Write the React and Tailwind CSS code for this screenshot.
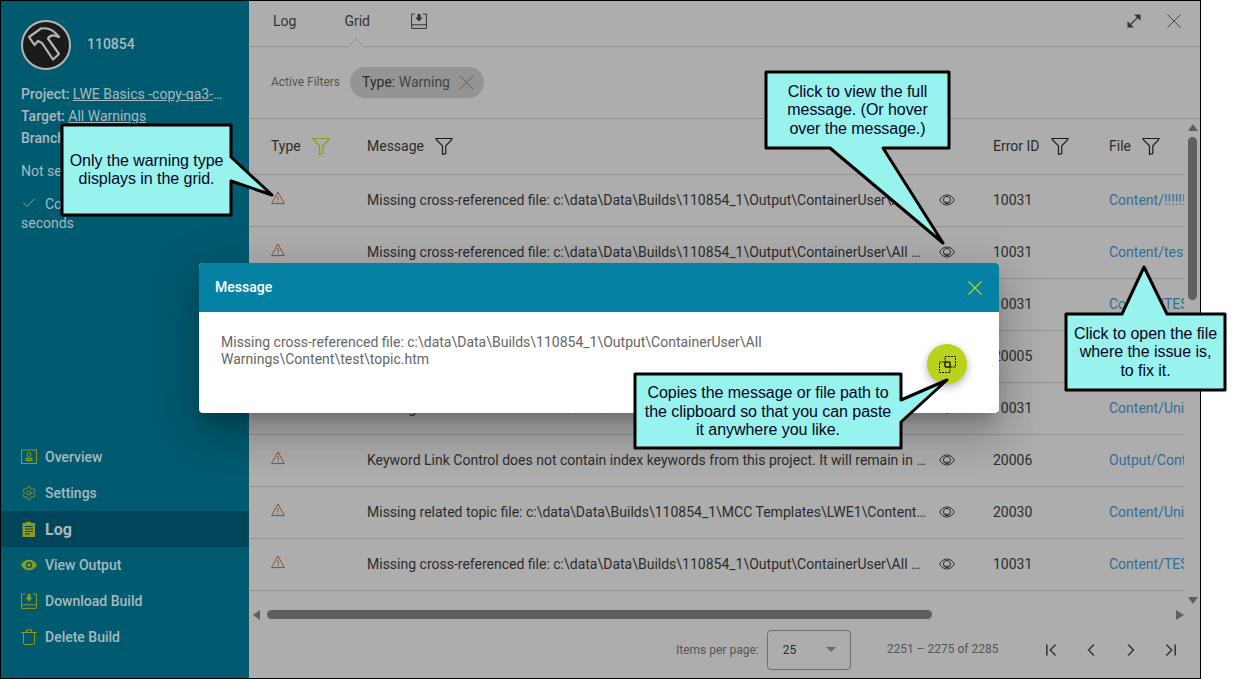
import React from "react";
import { Settings, Check, ChevronLeft, ChevronRight, ChevronFirst, ChevronLast } from "lucide-react";

const Cross = ({ size, color, width = 1 }) => (
  <svg width={size} height={size} viewBox="0 0 14 14" fill="none" stroke={color} strokeWidth={width}>
    <path d="M.5 .5l13 13M13.500 .5l-13 13" />
  </svg>
);

const Filter = ({ color = "#1c1c1c" }) => (
  <svg width="18" height="18" viewBox="0 0 18 18" fill="none" stroke={color} strokeWidth="1.2">
    <path d="M1 1.500h16l-1 2-5.200 5.300v7.700l-3.300 1V8.800L2 3.500z" />
  </svg>
);

const Warn = () => (
  <svg width="14" height="14" viewBox="0 0 14 14" fill="none" stroke="#87552c" strokeWidth="1">
    <path d="M7 1 L13.400 12.600 H.6 Z" />
    <path d="M7 5v4.200M7 10.200v1.200" />
  </svg>
);

const Eye = () => (
  <svg width="16" height="12" viewBox="0 0 16 12" fill="none" stroke="#2c2c2c" strokeWidth="1">
    <path d="M.6 6C2.500 2.600 5 1 8 1s5.500 1.600 7.400 5c-1.900 3.400-4.400 5-7.400 5S2.500 9.400 .6 6z" />
    <circle cx="8" cy="6" r="3.600" />
    <path d="M5.600 7.500c1 1.300 3.800 1.300 4.800 0" />
  </svg>
);

const Hammer = () => (
  <svg width="50" height="50" viewBox="0 0 50 50">
    <circle cx="25" cy="25" r="24" fill="#1b1b1b" stroke="#b5b5b5" strokeWidth="2" />
    <path d="M8 17 L20 8.500 C26 7.500 33 10 38 17 C33 14.500 29 15 27 18.500 L38 34 L32 39.500 L21 23 L17 21 L13.500 25 Z" fill="none" stroke="#b5b5b5" strokeWidth="2.200" strokeLinejoin="round" />
  </svg>
);

const navClass = "w-4 h-4";
const olive = "#8e9a1a";

const IconOverview = () => (
  <svg className={navClass} viewBox="0 0 16 16" fill="none" stroke={olive} strokeWidth="1">
    <rect x=".5" y="1" width="15" height="13.500" />
    <circle cx="8" cy="5.500" r="2" />
    <path d="M4.500 9.500h7M4.500 11.500h7" strokeWidth="1.300" />
  </svg>
);
const IconLog = () => (
  <svg className={navClass} viewBox="0 0 16 16">
    <path d="M1.500 2h3.500V.8h5V2h4v14h-12.500z" fill={olive} />
    <path d="M4 5.500h8M4 8h8M4 10.500h8M4 13h5" stroke="#00455a" strokeWidth="1" />
  </svg>
);
const IconEyeFill = () => (
  <svg className={navClass} viewBox="0 0 16 16">
    <path d="M0 8c2-3.600 4.700-5.200 8-5.200s6 1.600 8 5.200c-2 3.600-4.700 5.200-8 5.200S2 11.600 0 8z" fill={olive} />
    <circle cx="8" cy="8" r="3.200" fill="#005b70" />
    <circle cx="8" cy="8" r="1.800" fill={olive} />
  </svg>
);
const DownloadBox = ({ color, size = "w-4 h-4" }) => (
  <svg className={size} viewBox="0 0 16 16" fill="none" stroke={color} strokeWidth="1">
    <path d="M4 1H.6v14.400h14.800V1H12M.6 11.800h14.800" />
    <path d="M6.500 1h3v3.500h2.200L8 8.500 4.300 4.500h2.200z" fill={color} stroke="none" />
  </svg>
);
const IconTrash = () => (
  <svg className={navClass} viewBox="0 0 16 16" fill="none" stroke={olive} strokeWidth="1">
    <path d="M0 3.500h16M5.500 3.500V1h5v2.500M2.500 3.500v11a1 1 0 0 0 1 1h9a1 1 0 0 0 1-1v-11" />
  </svg>
);

const nav = [
  ["Overview", <IconOverview />],
  ["Settings", <Settings size={16} color={olive} strokeWidth={1.4} />],
  ["Log", <IconLog />, true],
  ["View Output", <IconEyeFill />],
  ["Download Build", <DownloadBox color={olive} />],
  ["Delete Build", <IconTrash />],
];

const xref = "Missing cross-referenced file: c:\\data\\Data\\Builds\\110854_1\\Output\\ContainerUser\\All Warnings\\Content\\test\\topic.htm";
const rows = [
  [xref, "10031", "Content/!!!!!!!!!"],
  [xref, "10031", "Content/test/topic"],
  [xref, "10031", "Content/TEST/topic"],
  ["Keyword Link Control does not contain index keywords from this project. It will remain in the output", "20005", "Content/Unit/topic"],
  [xref, "10031", "Content/Unit/topic"],
  ["Keyword Link Control does not contain index keywords from this project. It will remain in the output as is", "20006", "Output/Content/x"],
  ["Missing related topic file: c:\\data\\Data\\Builds\\110854_1\\MCC Templates\\LWE1\\Content\\Unit\\topic.htm", "20030", "Content/Unit/topic"],
  [xref, "10031", "Content/TEST/topic"],
];

const Callout = ({ points }) => (
  <svg className="absolute left-0 top-0 pointer-events-none" width="1235" height="679">
    <polygon points={points} fill="#98f2ee" stroke="#000" strokeWidth="3" strokeLinejoin="round" />
  </svg>
);

const CalloutText = ({ left, top, width, lines }) => (
  <div
    className="absolute text-center text-[16px] leading-[18.500px] text-[#05051e] tracking-[-0.05px] font-['Liberation_Sans',Arial,sans-serif]"
    style={{ left, top, width }}
  >
    {lines.map((l) => (
      <div key={l}>{l}</div>
    ))}
  </div>
);

export default function App() {
  return (
    <div className="relative w-[1235px] h-[679px] overflow-hidden bg-white font-['Roboto',sans-serif]">
      <div className="flex w-[1201px] h-[679px] border border-black">
        {/* sidebar */}
        <aside className="w-[248px] shrink-0 flex flex-col bg-[#005b70] text-[#a9b9bd] text-sm">
          <div className="flex items-center gap-4 pl-5 pt-[19px]">
            <Hammer />
            <span className="font-medium text-sm pb-[2px]">110854</span>
          </div>
          <div className="pl-5 mt-[13px] leading-[22px]">
            <div className="truncate w-[205px]"><span className="font-medium">Project: </span><span className="underline">LWE Basics -copy-qa3-copy</span></div>
            <div><span className="font-medium">Target: </span><span className="underline">All Warnings</span></div>
            <div className="font-medium">Branch: main</div>
            <div className="mt-[11px]">Not sent to destination</div>
            <div className="mt-[13px] leading-[19px] w-[210px]">
              <Check size={16} strokeWidth={1.2} className="inline mr-2 -mt-1" />
              Completed in 3 minutes 12 seconds
            </div>
          </div>
          <nav className="mt-auto mb-[23px] flex flex-col">
            {nav.map(([label, icon, active]) => (
              <div key={label} className={"h-9 pl-5 flex items-center gap-2 " + (active ? "bg-[#00455a] font-bold text-base" : "font-medium text-sm")}>
                {icon}
                <span className={active ? "pt-[1px]" : ""}>{label}</span>
              </div>
            ))}
          </nav>
        </aside>

        {/* main */}
        <main className="relative flex-1 min-w-0 flex flex-col bg-[#adadad] text-sm text-[#2c2c2c]">
          <div className="relative h-[46px] shrink-0 flex items-center border-b border-[#939393] pb-[5px]">
            <span className="ml-6 text-[#333]">Log</span>
            <span className="ml-[48px] text-[#333]">Grid</span>
            <span className="ml-[41px]"><DownloadBox color="#333" /></span>
            <svg className="absolute left-[99px] bottom-[-1px]" width="16" height="8" viewBox="0 0 16 8">
              <path d="M0 8 L8 0 L16 8" fill="#adadad" stroke="#939393" />
              <path d="M1 8h14" stroke="#adadad" strokeWidth="1.500" />
            </svg>
            <div className="ml-auto flex items-center gap-[25px] pr-[19px]">
              <svg width="16" height="16" viewBox="0 0 16 16" fill="none" stroke="#333" strokeWidth="1.100">
                <path d="M3 13L13 3" />
                <path d="M9.500 2h4.500v4.500zM2 9.500v4.500h4.500z" fill="#333" />
              </svg>
              <Cross size={14} color="#444" />
            </div>
          </div>

          <div className="h-[72px] shrink-0 flex items-center border-b border-[#939393] pl-[22px] pb-[1px]">
            <span className="text-xs text-[#555]">Active Filters</span>
            <span className="ml-[10px] h-[31px] w-[134px] rounded-full bg-[#949494] flex items-center pl-[12px] gap-[9px] text-[#444]">
              <span><span className="text-[#2c2c2c]">Type:</span> Warning</span>
              <Cross size={15} color="#6e6e6e" />
            </span>
          </div>

          <div className="flex-1 min-h-0 flex">
            <div className="w-[935px] shrink-0 overflow-hidden">
              <div className="h-[56px] flex items-center border-b border-[#939393] pl-[22px] pb-[1px]">
                <div className="w-[96px] flex items-center gap-[11px]">Type <Filter color={olive} /></div>
                <div className="w-[626px] flex items-center gap-[11px]">Message <Filter /></div>
                <div className="w-[116px] flex items-center gap-[11px]">Error ID <Filter /></div>
                <div className="flex-1 flex items-center gap-[11px]">File <Filter /></div>
              </div>
              {rows.map(([msg, id, file], i) => (
                <div key={i} className="h-[52px] flex items-center border-b border-[#939393] pl-[22px] pb-[1px]">
                  <div className="w-[96px] flex mb-[4px]"><Warn /></div>
                  <div className="w-[626px] flex items-center">
                    <div className="w-[560px] truncate">{msg}</div>
                    <div className="ml-[12px]"><Eye /></div>
                  </div>
                  <div className="w-[116px]">{id}</div>
                  <div className="w-[75px] overflow-hidden whitespace-nowrap text-[#2f6f99]">{file}</div>
                </div>
              ))}
              <div className="h-[34px] flex items-center pl-[4px] pt-[13px]">
                <svg width="8" height="10" viewBox="0 0 8 10"><path d="M7 0v10L0 5z" fill="#5f5f5f" /></svg>
                <div className="ml-[6px] w-[665px] h-[9px] rounded-full bg-[#5f5f5f]" />
                <svg className="ml-[244px]" width="8" height="10" viewBox="0 0 8 10"><path d="M0 0v10l8-5z" fill="#5f5f5f" /></svg>
              </div>
            </div>
            <div className="w-[16px] flex flex-col items-center pt-[5px] pl-[1px]">
              <svg className="shrink-0" width="10" height="7" viewBox="0 0 10 7"><path d="M0 7h10L5 0z" fill="#5f5f5f" /></svg>
              <div className="mt-[6px] w-[9px] h-[163px] shrink-0 rounded-full bg-[#5f5f5f]" />
              <svg className="mt-[297px] shrink-0" width="10" height="7" viewBox="0 0 10 7"><path d="M0 0h10L5 7z" fill="#5f5f5f" /></svg>
            </div>
          </div>

          <div className="h-[53px] shrink-0 flex items-center pl-[427px] pb-[4px] text-xs text-[#555]">
            <span>Items per page:</span>
            <span className="ml-2 w-[84px] h-[40px] rounded border border-[#6e6e6e] flex items-center justify-between pl-[15px] pr-[14px] text-[#2c2c2c]">
              25
              <svg width="10" height="5" viewBox="0 0 10 5"><path d="M0 0h10L5 5z" fill="#6b6b6b" /></svg>
            </span>
            <span className="ml-9 -mt-[2px]">2251 – 2275 of 2285</span>
            <div className="ml-[43px] flex items-center gap-[20px] text-[#333]">
              <ChevronFirst size={20} strokeWidth={1.800} />
              <ChevronLeft size={20} strokeWidth={1.800} />
              <ChevronRight size={20} strokeWidth={1.800} />
              <ChevronLast size={20} strokeWidth={1.800} />
            </div>
          </div>
        </main>
      </div>

      {/* modal */}
      <div className="absolute left-[199px] top-[263px] w-[800px] h-[150px] rounded bg-white shadow-[0_11px_15px_-7px_rgba(0,0,0,0.2),0_24px_38px_3px_rgba(0,0,0,0.14),0_9px_46px_8px_rgba(0,0,0,0.12)]">
        <div className="h-[49px] rounded-t bg-[#0582a3] flex items-center justify-between pl-4 pr-[17px] pb-[2px] text-white text-sm font-medium">
          <span>Message</span>
          <span className="mt-[2px]"><Cross size={14} color="#bcd01e" width={1.2} /></span>
        </div>
        <div className="pl-[22px] pt-[22px] w-[600px] text-sm leading-[17px] text-[#666]">
          Missing cross-referenced file: c:\data\Data\Builds\110854_1\Output\ContainerUser\All Warnings\Content\test\topic.htm
        </div>
        <div className="absolute left-[728px] top-[81px] w-10 h-10 rounded-full bg-[#bcd01e] shadow-[0_3px_8px_rgba(0,0,0,0.3)] flex items-center justify-center">
          <svg width="17" height="17" viewBox="0 0 17 17" fill="none" stroke="#111" strokeWidth="1">
            <rect x="6" y=".5" width="10.500" height="10.500" strokeDasharray="2 1" />
            <rect x=".5" y="6" width="10.500" height="10.500" strokeDasharray="2 1" />
            <path d="M6 6h5v5H6z" />
          </svg>
        </div>
      </div>

      {/* callouts */}
      <Callout points="62,125 231,125 231,157 272,195 231,181 231,215 62,215" />
      <CalloutText left={62} top={151.5} width={169} lines={["Only the warning type", "displays in the grid."]} />

      <Callout points="766,72 949,72 949,148 883,148 943,243 830,148 766,148" />
      <CalloutText left={766} top={82.5} width={183} lines={["Click to view the full", "message. (Or hover", "over the message.)"]} />

      <Callout points="1066,314 1122,314 1144,267 1167,314 1225,314 1225,390 1066,390" />
      <CalloutText left={1066} top={324.5} width={159} lines={["Click to open the file", "where the issue is,", "to fix it."]} />

      <Callout points="635,374 901,374 901,400 947,380 901,422 901,448 635,448" />
      <CalloutText left={635} top={384} width={266} lines={["Copies the message or file path to", "the clipboard so that you can paste", "it anywhere you like."]} />
    </div>
  );
}
